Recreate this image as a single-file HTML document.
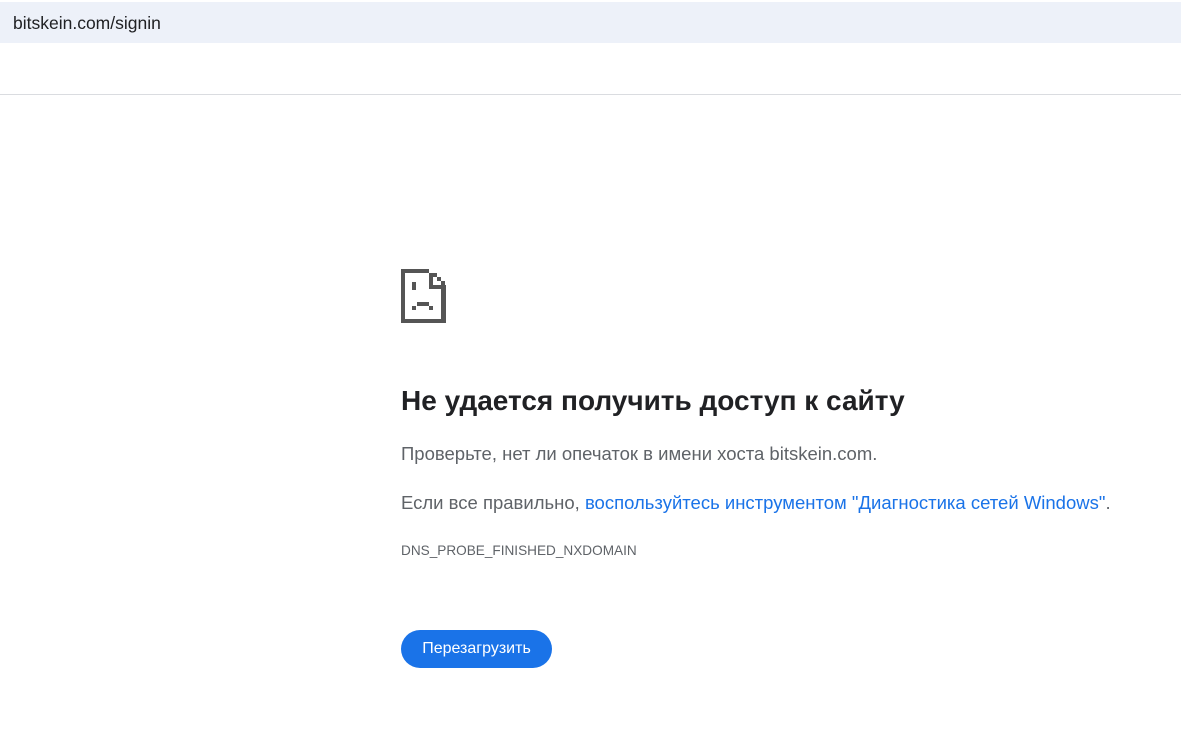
<!DOCTYPE html>
<html><head><meta charset="utf-8"><style>
body{margin:0;width:1181px;height:751px;background:#fff;font-family:"Liberation Sans","DejaVu Sans",sans-serif;position:relative;overflow:hidden}
.bar{position:absolute;left:0;top:2px;width:1181px;height:41px;background:#edf1f9}
.url{position:absolute;left:13px;top:13px;font-size:17.5px;color:#202124}
.line{position:absolute;left:0;top:94px;width:1181px;height:1px;background:#dadce0}
.t{position:absolute;left:401px;white-space:nowrap}
h1{margin:0;font-size:28px;font-weight:bold;color:#202124;top:385px}
.p{font-size:18.5px;color:#5f6368}
a{color:#1a73e8;text-decoration:none}
.btn{position:absolute;left:401px;top:630px;width:151px;height:38px;border-radius:19px;background:#1a73e8;color:#fff;font-size:16px;line-height:38px;text-align:center}
</style></head><body>
<div class="bar"></div><div class="url">bitskein.com/signin</div>
<div class="line"></div>
<svg style="position:absolute;left:401px;top:268px" width="46" height="56" fill="#555">
<rect x="0" y="1" width="4" height="54"/>
<rect x="0" y="1" width="28" height="4"/>
<rect x="0" y="51" width="45" height="4"/>
<rect x="40" y="17" width="5" height="38"/>
<rect x="28" y="5" width="4" height="13"/>
<rect x="28" y="17" width="17" height="4"/>
<rect x="32" y="5" width="4" height="4"/>
<rect x="36" y="9" width="4" height="4"/>
<rect x="40" y="13" width="4" height="4"/>
<rect x="11" y="14" width="4" height="8"/>
<rect x="16" y="34" width="12" height="4"/>
<rect x="11" y="38" width="4" height="4"/>
<rect x="28" y="38" width="4" height="4"/>
</svg>
<h1 class="t">Не удается получить доступ к сайту</h1>
<div class="t p" style="top:443px">Проверьте, нет ли опечаток в имени хоста bitskein.com.</div>
<div class="t p" style="top:492px">Если все правильно, <a>воспользуйтесь инструментом "Диагностика сетей Windows"</a>.</div>
<div class="t" style="top:543px;font-size:13.6px;color:#5f6368">DNS_PROBE_FINISHED_NXDOMAIN</div>
<div class="btn">Перезагрузить</div>
</body></html>
